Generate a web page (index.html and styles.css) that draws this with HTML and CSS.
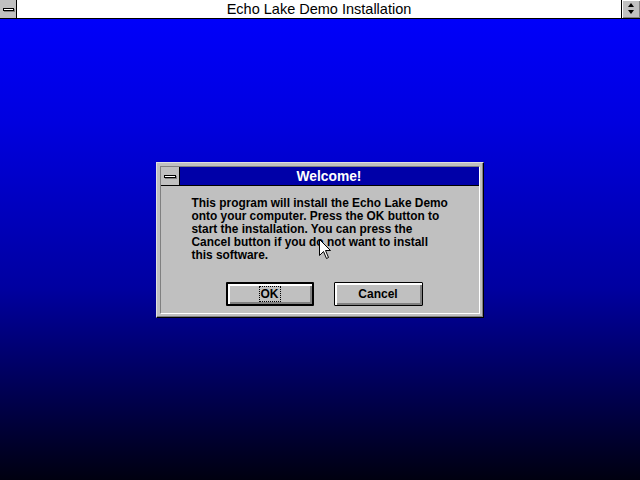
FILE: index.html
```html
<!DOCTYPE html>
<html>
<head>
<meta charset="utf-8">
<title>Echo Lake Demo Installation</title>
<link rel="stylesheet" href="styles.css">
</head>
<body>
<div class="screen">
  <div class="titlebar">
    <div class="sysbox"><span class="sysbar"></span></div>
    <div class="title">Echo Lake Demo Installation</div>
    <div class="restore">
      <svg width="18" height="18" viewBox="0 0 18 18"><polygon points="9,3 12,7 6,7" fill="#000"/><polygon points="6,10 12,10 9,14" fill="#000"/></svg>
    </div>
  </div>
  <div class="desktop">
    <div class="dialog">
      <div class="dlg-inner">
        <div class="caption">
          <div class="dsys"><span class="dsysbar"></span></div>
          <div class="ctitle">Welcome!</div>
        </div>
        <div class="body">
          <p class="msg">This program will install the Echo Lake Demo<br>onto your computer. Press the OK button to<br>start the installation. You can press the<br>Cancel button if you do not want to install<br>this software.</p>
          <div class="buttons">
            <div class="btn default"><span class="focus">OK</span></div>
            <div class="btn">Cancel</div>
          </div>
        </div>
      </div>
    </div>
  </div>
  <svg class="cursor" width="13" height="21" viewBox="0 0 13 21"><path d="M0.5,0.5 L0.5,16.5 L4.5,12.5 L7.5,19.5 L9.5,18.5 L6.5,11.5 L11.5,11.5 Z" fill="#fff" stroke="#000" stroke-width="1"/></svg>
</div>
</body>
</html>
```
FILE: styles.css
```css
*, *::before, *::after {
  box-sizing: border-box;
}
html, body {
  margin: 0;
  padding: 0;
}
body {
  width: 640px;
  height: 480px;
  overflow: hidden;
  font-family: "Liberation Sans", Arial, sans-serif;
}
.screen {
  position: relative;
  width: 640px;
  height: 480px;
  display: flex;
  flex-direction: column;
  background: linear-gradient(to bottom, #0000ff 0%, #0000e0 25%, #0000a0 60%, #000010 100%);
}
.titlebar {
  height: 19px;
  border-bottom: 1px solid #000;
  background: #fff;
  display: flex;
  flex-shrink: 0;
}
.sysbox {
  width: 17px;
  height: 18px;
  background: #c0c0c0;
  border-right: 1px solid #000;
  display: flex;
  align-items: center;
  justify-content: center;
}
.sysbar {
  display: block;
  width: 11px;
  height: 3px;
  background: #fff;
  border: 1px solid #000;
  box-shadow: 1px 1px 0 #808080;
}
.title {
  flex: 1;
  text-align: center;
  font-size: 14.5px;
  line-height: 18px;
  color: #000;
}
.restore {
  width: 19px;
  height: 18px;
  border-left: 1px solid #000;
  background: #c0c0c0;
  box-shadow: inset 1px 1px 0 #fff, inset -1px -1px 0 #808080;
}
.restore svg {
  display: block;
}
.desktop {
  flex: 1;
  display: flex;
  flex-direction: column;
  align-items: center;
  padding-top: 143px;
}
.dialog {
  width: 328px;
  height: 156px;
  margin-left: -1px;
  background: #c0c0c0;
  border: 1px solid;
  border-color: #dfdfdf #000 #000 #dfdfdf;
  padding: 3px;
  box-shadow: inset -1px -1px 0 #808080;
  display: flex;
  flex-direction: column;
}
.dlg-inner {
  flex: 1;
  border: 1px solid;
  border-color: #808080 #fff #fff #808080;
  display: flex;
  flex-direction: column;
}
.caption {
  height: 19px;
  display: flex;
  border-bottom: 1px solid #000;
}
.dsys {
  width: 19px;
  height: 18px;
  background: #c0c0c0;
  border-right: 1px solid #000;
  display: flex;
  align-items: center;
  justify-content: center;
}
.dsysbar {
  display: block;
  width: 12px;
  height: 3px;
  background: #fff;
  border: 1px solid #000;
  box-shadow: 1px 1px 0 #808080;
}
.ctitle {
  flex: 1;
  background: #0000a8;
  color: #fff;
  font-weight: bold;
  font-size: 13.8px;
  line-height: 18px;
  padding-top: 1px;
  text-align: center;
}
.body {
  flex: 1;
  padding: 11px 0 0 31px;
  display: flex;
  flex-direction: column;
}
.msg {
  margin: 0;
  font-size: 11.9px;
  font-weight: bold;
  line-height: 13px;
  color: #000;
}
.buttons {
  display: flex;
  gap: 20px;
  margin-top: 20px;
  margin-left: 34px;
}
.btn {
  width: 89px;
  height: 24px;
  border: 1px solid #000;
  border-radius: 1px;
  box-shadow: inset 1px 1px 0 #fff, inset 2px 2px 0 #fff, inset -1px -1px 0 #808080, inset -2px -2px 0 #808080;
  background: #c0c0c0;
  font-size: 12px;
  font-weight: bold;
  line-height: 22px;
  text-align: center;
  color: #000;
}
.btn.default {
  width: 88px;
  border: 2px solid #000;
  line-height: 20px;
}
.focus {
  outline: 1px dotted #000;
  outline-offset: 0;
  padding: 0 1px;
}
.cursor {
  position: absolute;
  left: 319px;
  top: 239px;
}
```
